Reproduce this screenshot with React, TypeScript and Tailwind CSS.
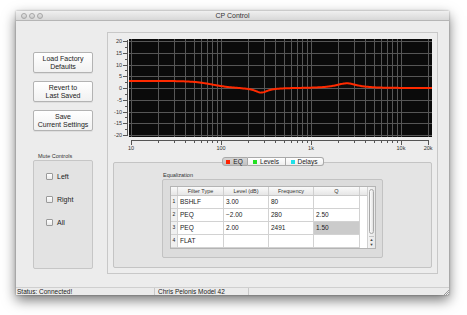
import React from "react";

// chart geometry in local svg px
const PX_PER_DECADE = 90;
const X0 = 23; // 10 Hz
const Y0 = 55; // 0 dB
const PX_PER_DB = 2.35;
const FS = 48000;

type Band = { type: "shelf" | "peq"; f0: number; gain: number; q: number };

const bands: Band[] = [
  { type: "shelf", f0: 80, gain: 3, q: 1 },
  { type: "peq", f0: 280, gain: -2, q: 2.5 },
  { type: "peq", f0: 2491, gain: 2, q: 1.5 },
];

function coeffs(b: Band) {
  const A = Math.pow(10, b.gain / 40);
  const w0 = (2 * Math.PI * b.f0) / FS;
  const cs = Math.cos(w0);
  const sn = Math.sin(w0);
  if (b.type === "shelf") {
    const alpha = (sn / 2) * Math.sqrt((A + 1 / A) * (1 / 1 - 1) + 2);
    const sa = 2 * Math.sqrt(A) * alpha;
    return {
      b: [A * (A + 1 - (A - 1) * cs + sa), 2 * A * (A - 1 - (A + 1) * cs), A * (A + 1 - (A - 1) * cs - sa)],
      a: [A + 1 + (A - 1) * cs + sa, -2 * (A - 1 + (A + 1) * cs), A + 1 + (A - 1) * cs - sa],
    };
  }
  const alpha = sn / (2 * b.q);
  return {
    b: [1 + alpha * A, -2 * cs, 1 - alpha * A],
    a: [1 + alpha / A, -2 * cs, 1 - alpha / A],
  };
}

function mag(c: number[], w: number) {
  const re = c[0] + c[1] * Math.cos(w) + c[2] * Math.cos(2 * w);
  const im = -c[1] * Math.sin(w) - c[2] * Math.sin(2 * w);
  return Math.sqrt(re * re + im * im);
}

function responseDb(f: number) {
  const w = (2 * Math.PI * f) / FS;
  let db = 0;
  for (const b of bands) {
    const c = coeffs(b);
    db += 20 * Math.log10(mag(c.b, w) / mag(c.a, w));
  }
  return db;
}

const xOf = (f: number) => X0 + PX_PER_DECADE * Math.log10(f / 10);
const yOf = (db: number) => Y0 - db * PX_PER_DB;

function EqChart() {
  const freqs: number[] = [];
  for (let d = 10; d <= 10000; d *= 10) {
    for (let k = 1; k < 10; k++) {
      const f = k * d;
      if (f <= 20000) freqs.push(f);
    }
  }
  freqs.push(20000);

  const pts: string[] = [];
  for (let x = 21; x <= 324; x += 1) {
    const f = 10 * Math.pow(10, (x - X0) / PX_PER_DECADE);
    pts.push(`${x},${yOf(responseDb(f)).toFixed(2)}`);
  }

  const dbs = [20, 15, 10, 5, 0, -5, -10, -15, -20];
  const labels: [number, string][] = [
    [10, "10"],
    [100, "100"],
    [1000, "1k"],
    [10000, "10k"],
    [20000, "20k"],
  ];

  return (
    <svg width={329} height={124} className="block" style={{ fontFamily: "'Liberation Sans', Arial, sans-serif" }}>
      <defs>
        <clipPath id="plot">
          <rect x={21} y={6} width={303} height={98} />
        </clipPath>
      </defs>
      <rect x={21} y={6} width={303} height={98} fill="#0b0b0b" />
      <g stroke="#575757" strokeWidth={1} shapeRendering="crispEdges">
        {freqs.map((f) => (
          <line key={f} x1={Math.round(xOf(f)) + 0.5} x2={Math.round(xOf(f)) + 0.5} y1={6} y2={104} />
        ))}
        {dbs.map((d) => (
          <line key={d} x1={21} x2={324} y1={Math.round(yOf(d)) + 0.5} y2={Math.round(yOf(d)) + 0.5} />
        ))}
      </g>
      <polyline points={pts.join(" ")} fill="none" stroke="#ff2a00" strokeWidth={2} clipPath="url(#plot)" />

      {/* y axis */}
      <g stroke="#555" strokeWidth={1} shapeRendering="crispEdges">
        <line x1={19.5} x2={19.5} y1={7} y2={103} />
        {dbs.map((d) => (
          <line key={d} x1={15} x2={19} y1={Math.round(yOf(d)) + 0.5} y2={Math.round(yOf(d)) + 0.5} />
        ))}
        {[17.5, 12.5, 7.5, 2.5, -2.5, -7.5, -12.5, -17.5].map((d) => (
          <line key={d} x1={17} x2={19} y1={Math.round(yOf(d)) + 0.5} y2={Math.round(yOf(d)) + 0.5} />
        ))}
      </g>
      {dbs.map((d) => (
        <text key={d} x={14} y={yOf(d) + 2} fontSize={5.5} textAnchor="end" fill="#333">
          {d}
        </text>
      ))}

      {/* x axis */}
      <g stroke="#555" strokeWidth={1} shapeRendering="crispEdges">
        <line x1={X0} x2={xOf(20000) + 1} y1={107.5} y2={107.5} />
        {freqs.map((f) => {
          const major = labels.some(([lf]) => lf === f);
          return (
            <line
              key={f}
              x1={Math.round(xOf(f)) + 0.5}
              x2={Math.round(xOf(f)) + 0.5}
              y1={107}
              y2={major ? 112 : 110}
            />
          );
        })}
      </g>
      {labels.map(([f, l]) => (
        <text key={l} x={xOf(f)} y={117} fontSize={5.5} textAnchor="middle" fill="#333">
          {l}
        </text>
      ))}
    </svg>
  );
}

function PushButton({ lines }: { lines: string[] }) {
  return (
    <button
      type="button"
      className="h-[21px] w-full rounded-[2px] border border-[#b3b3b3] bg-gradient-to-b from-white to-[#f1f1f1] text-[7px] leading-[8px] text-[#222] shadow-[0_1px_0_rgba(0,0,0,0.06)]"
    >
      {lines.map((l) => (
        <div key={l}>{l}</div>
      ))}
    </button>
  );
}

function Check({ label }: { label: string }) {
  return (
    <div className="flex h-[7px] items-center gap-[4px]">
      <div className="h-[7px] w-[7px] rounded-[1px] border border-[#9a9a9a] bg-gradient-to-b from-white to-[#e9e9e9]" />
      <span className="text-[7px] leading-[7px] text-[#222]">{label}</span>
    </div>
  );
}

const rows = [
  ["1", "BSHLF", "3.00", "80", ""],
  ["2", "PEQ", "\u22122.00", "280", "2.50"],
  ["3", "PEQ", "2.00", "2491", "1.50"],
  ["4", "FLAT", "", "", ""],
];
const rowH = ["h-[13px]", "h-[14px]", "h-[13px]", "h-[14px]"];

function EqTable() {
  return (
    <div className="flex h-[63px] w-[206px] border border-[#b4b4b4] bg-white">
      <div className="flex flex-1 flex-col">
        <div className="flex h-[9px] border-b border-[#c9c9c9] bg-gradient-to-b from-[#fafafa] to-[#e6e6e6] text-[5.5px] leading-[8px] text-[#333]">
          <div className="w-[7px] border-r border-[#cfcfcf]" />
          <div className="w-[46px] border-r border-[#cfcfcf] text-center">Filter Type</div>
          <div className="w-[45px] border-r border-[#cfcfcf] text-center">Level (dB)</div>
          <div className="w-[45px] border-r border-[#cfcfcf] text-center">Frequency</div>
          <div className="w-[46px] border-r border-[#cfcfcf] text-center">Q</div>
          <div className="flex-1" />
        </div>
        {rows.map((r, i) => (
          <div key={r[0]} className={`flex ${rowH[i]} text-[6.5px] text-[#222]`}>
            <div className="flex w-[7px] items-center justify-center border-r border-b border-[#d2d2d2] bg-[#f0f0f0] text-[5px]">
              {r[0]}
            </div>
            <div className="flex w-[46px] items-center border-r border-b border-[#d2d2d2] pl-[2px]">{r[1]}</div>
            <div className="flex w-[45px] items-center border-r border-b border-[#d2d2d2] pl-[2px]">{r[2]}</div>
            <div className="flex w-[45px] items-center border-r border-b border-[#d2d2d2] pl-[2px]">{r[3]}</div>
            <div
              className={`flex w-[46px] items-center border-r border-b border-[#d2d2d2] pl-[2px] ${
                i === 2 ? "bg-[#cbcbcb]" : ""
              }`}
            >
              {r[4]}
            </div>
            <div className="flex-1" />
          </div>
        ))}
      </div>
      {/* scrollbar */}
      <div className="flex w-[8px] flex-col border-l border-[#d0d0d0] bg-gradient-to-r from-[#f4f4f4] to-[#e8e8e8] px-[1px] pt-[2px]">
        <div className="h-[45px] rounded-[4px] border border-[#a8a8a8] bg-gradient-to-r from-[#fdfdfd] to-[#e2e2e2]" />
        <div className="mt-auto flex flex-col items-center border-t border-[#c6c6c6] pb-[1px] text-[4px] leading-[5px] text-[#444]">
          <span>▲</span>
          <span>▼</span>
        </div>
      </div>
    </div>
  );
}

function Tab({ label, color, active, w }: { label: string; color: string; active?: boolean; w: string }) {
  return (
    <div
      className={`flex h-[9px] ${w} items-center justify-center gap-[3px] border border-[#a9a9a9] text-[6.5px] leading-[7px] text-[#222] ${
        active ? "bg-gradient-to-b from-[#d6d6d6] to-[#c2c2c2]" : "bg-gradient-to-b from-white to-[#eeeeee]"
      } first:rounded-l-[3px] last:rounded-r-[3px] [&+&]:border-l-0`}
    >
      <span className={`h-[4px] w-[4px] ${color}`} />
      {label}
    </div>
  );
}

export default function App() {
  return (
    <div
      className="h-[315px] w-[467px] overflow-hidden bg-white pl-[16px] pt-[11px]"
      style={{ fontFamily: "'Liberation Sans', Arial, sans-serif" }}
    >
      <div className="flex h-[284px] w-[433px] flex-col bg-[#ececec] shadow-[0_5px_12px_rgba(0,0,0,0.55),0_0_2px_rgba(0,0,0,0.35)]">
        {/* title bar */}
        <div className="relative flex h-[10px] items-center justify-center border-b border-[#b5b5b5] bg-gradient-to-b from-[#f0f0f0] to-[#d8d8d8]">
          <div className="absolute left-[5px] top-[2px] flex gap-[2px]">
            {[0, 1, 2].map((i) => (
              <span
                key={i}
                className="h-[6px] w-[6px] rounded-full border border-[#a6a6a6] bg-gradient-to-b from-[#e4e4e4] to-[#c9c9c9]"
              />
            ))}
          </div>
          <span className="text-[7px] leading-[8px] text-[#333]">CP Control</span>
        </div>

        {/* body */}
        <div className="flex h-[266px] pl-[17px] pr-[11px] pt-[11px]">
          {/* left column */}
          <div className="flex w-[60px] flex-col pt-[20px]">
            <div className="flex flex-col gap-[8px]">
              <PushButton lines={["Load Factory", "Defaults"]} />
              <PushButton lines={["Revert to", "Last Saved"]} />
              <PushButton lines={["Save", "Current Settings"]} />
            </div>
            <div className="ml-[5px] mt-[22px] h-[7px] text-[5.5px] leading-[7px] text-[#333]">Mute Controls</div>
            <div className="flex h-[109px] flex-col gap-[16px] rounded-[2px] border border-[#c6c6c6] bg-[#e3e3e3] pl-[12px] pt-[12px]">
              <Check label="Left" />
              <Check label="Right" />
              <Check label="All" />
            </div>
          </div>

          {/* right panel */}
          <div className="ml-[14px] flex h-[242px] w-[331px] flex-col border border-[#c8c8c8] bg-[#ededed] px-[5px]">
            <div className="-mx-[5px]">
              <EqChart />
            </div>
            <div className="relative z-10 -mb-[4px] flex justify-center">
              <Tab label="EQ" color="bg-[#ff2200]" active w="w-[26px]" />
              <Tab label="Levels" color="bg-[#22e022]" w="w-[38px]" />
              <Tab label="Delays" color="bg-[#1fe0e8]" w="w-[38px]" />
            </div>
            <div className="flex h-[106px] flex-col items-center rounded-[2px] border border-[#c4c4c4] bg-[#e4e4e4] pt-[8px]">
              <div className="w-[221px]">
                <div className="ml-[1px] h-[8px] text-[5.5px] leading-[8px] text-[#333]">Equalization</div>
                <div className="h-[79px] rounded-[2px] border border-[#c2c2c2] bg-[#dcdcdc] pl-[7px] pt-[6px]">
                  <EqTable />
                </div>
              </div>
            </div>
          </div>
        </div>

        {/* status bar */}
        <div className="relative flex h-[8px] border-t border-[#cfcfcf] bg-[#ebebeb] text-[6.5px] leading-[7px] text-[#222]">
          <div className="w-[139px] border-r border-[#c8c8c8] pl-[1px]">Status: Connected!</div>
          <div className="w-[94px] border-r border-[#c8c8c8] pl-[3px]">Chris Pelonis Model 42</div>
          <svg className="absolute bottom-0 right-0" width={6} height={6}>
            <line x1={1} y1={6} x2={6} y2={1} stroke="#999" />
            <line x1={3} y1={6} x2={6} y2={3} stroke="#999" />
            <line x1={5} y1={6} x2={6} y2={5} stroke="#999" />
          </svg>
        </div>
      </div>
    </div>
  );
}
